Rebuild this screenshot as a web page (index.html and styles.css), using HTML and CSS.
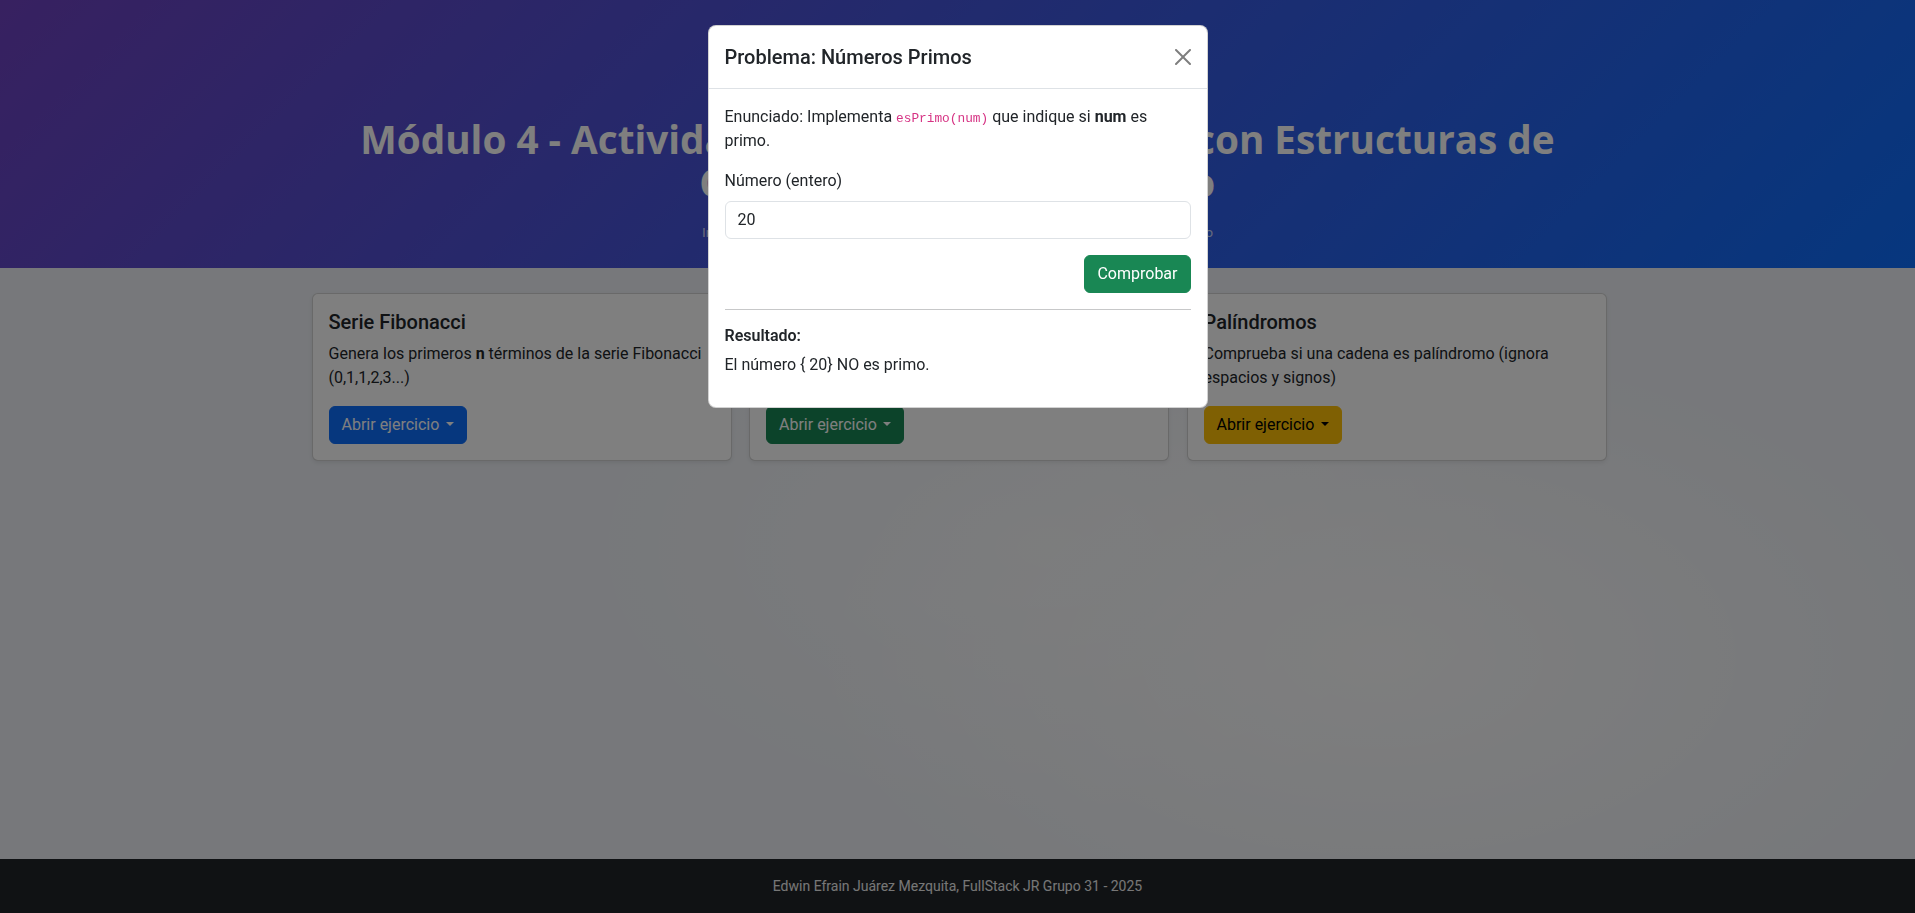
FILE: index.html
```html
<!DOCTYPE html>
<html lang="es">
<head>
<meta charset="utf-8">
<title>Módulo 4 - Actividad</title>
<link rel="stylesheet" href="styles.css">
</head>
<body>
<div class="page">
  <header class="hero">
    <h1 class="hero-title">Módulo 4 - Actividad: Solución de Ejercicios con Estructuras de<br><span class="title-line">Control en JavaScript Puro</span></h1>
    <p class="hero-sub">Interactúa con cada ejercicio: abre el modal, ingresa los datos y observa el resultado</p>
  </header>

  <main class="content">
    <div class="cards">
      <div class="card">
        <h5 class="card-title">Serie Fibonacci</h5>
        <p class="card-text">Genera los primeros <strong>n</strong> términos de la serie Fibonacci (0,1,1,2,3...)</p>
        <button class="btn btn-primary dropdown-toggle" type="button">Abrir ejercicio</button>
      </div>
      <div class="card">
        <h5 class="card-title">Números Primos</h5>
        <p class="card-text">Verifica si un número entero es primo utilizando ciclos y condicionales.</p>
        <button class="btn btn-success dropdown-toggle" type="button">Abrir ejercicio</button>
      </div>
      <div class="card">
        <h5 class="card-title">Palíndromos</h5>
        <p class="card-text">Comprueba si una cadena es palíndromo (ignora espacios y signos)</p>
        <button class="btn btn-warning dropdown-toggle" type="button">Abrir ejercicio</button>
      </div>
    </div>
  </main>

  <footer class="footer">
    <span>Edwin Efrain Juárez Mezquita, FullStack JR Grupo 31 - 2025</span>
  </footer>
</div>

<div class="backdrop"></div>

<div class="modal">
  <div class="modal-dialog">
    <div class="modal-content">
      <div class="modal-header">
        <h5 class="modal-title">Problema: Números Primos</h5>
        <button class="btn-close" type="button" aria-label="Cerrar">
          <svg viewBox="0 0 16 16" width="16" height="16"><path d="M.293.293a1 1 0 0 1 1.414 0L8 6.586 14.293.293a1 1 0 1 1 1.414 1.414L9.414 8l6.293 6.293a1 1 0 0 1-1.414 1.414L8 9.414l-6.293 6.293a1 1 0 0 1-1.414-1.414L6.586 8 .293 1.707a1 1 0 0 1 0-1.414z"/></svg>
        </button>
      </div>
      <div class="modal-body">
        <p class="statement">Enunciado: Implementa <code>esPrimo(num)</code> que indique si <strong>num</strong> es primo.</p>
        <div class="field">
          <label class="form-label" for="num">Número (entero)</label>
          <input class="form-control" id="num" type="number" value="20">
        </div>
        <div class="actions">
          <button class="btn btn-success" type="button">Comprobar</button>
        </div>
        <hr class="divider">
        <h6 class="result-title">Resultado:</h6>
        <p class="result-text">El número { 20} NO es primo.</p>
      </div>
    </div>
  </div>
</div>
</body>
</html>
```

FILE: styles.css
```css
* { box-sizing: border-box; }

html, body { height: 100%; }

body {
  margin: 0;
  font-family: Roboto, "Liberation Sans", sans-serif;
  font-size: 16px;
  line-height: 1.5;
  color: #212529;
  background-color: #eef1f6;
  background-image:
    radial-gradient(ellipse 30% 35% at 72% 72%, rgba(255,255,255,0.85), rgba(255,255,255,0) 100%),
    radial-gradient(ellipse 25% 30% at 55% 60%, rgba(255,255,255,0.5), rgba(255,255,255,0) 100%);
  overflow: hidden;
}

.page {
  min-height: 100vh;
  display: flex;
  flex-direction: column;
}

/* Header */
.hero {
  background: linear-gradient(135deg, #6f42c1 0%, #0d6efd 100%);
  color: #fff;
  text-align: center;
  padding: 118px 16px 25px;
}

.hero-title {
  margin: 0 0 18px;
  font-family: "Open Sans", Roboto, sans-serif;
  font-size: 38.7px;
  font-weight: 700;
  line-height: 43px;
}

.title-line {
  letter-spacing: 0.35px;
}

.hero-sub {
  margin: 0;
  font-size: 13.7px;
  line-height: 21px;
  color: rgba(255,255,255,0.75);
}

/* Cards */
.content {
  flex: 1;
  padding: 25px 0 0 3px;
}

.cards {
  display: grid;
  grid-template-columns: repeat(3, 420px);
  column-gap: 17.5px;
  justify-content: center;
  align-items: start;
}

.card {
  background: #fff;
  border: 1px solid rgba(0,0,0,0.175);
  border-radius: 6px;
  padding: 16px;
  box-shadow: 0 2px 4px rgba(0,0,0,0.075);
}

.card-title {
  margin: 0 0 8px;
  font-size: 20px;
  font-weight: 500;
  line-height: 1.2;
}

.card-text {
  margin: 0 0 16px;
}

/* Buttons */
.btn {
  display: inline-block;
  font-family: inherit;
  font-size: 16px;
  line-height: 1.5;
  padding: 6px 12px;
  border: 1px solid transparent;
  border-radius: 6px;
  cursor: pointer;
}

.btn-primary { background: #0d6efd; border-color: #0d6efd; color: #fff; }
.btn-success { background: #198754; border-color: #198754; color: #fff; }
.btn-warning { background: #ffc107; border-color: #ffc107; color: #000; }

.dropdown-toggle::after {
  content: "";
  display: inline-block;
  margin-left: 0.4em;
  vertical-align: 0.255em;
  border-top: 0.3em solid;
  border-right: 0.3em solid transparent;
  border-left: 0.3em solid transparent;
  border-bottom: 0;
}

/* Footer */
.footer {
  background: #212529;
  color: #eeeeee;
  text-align: center;
  font-size: 14px;
  line-height: 21px;
  padding: 17px 16px 16px;
}

/* Modal */
.backdrop {
  position: fixed;
  inset: 0;
  background: rgba(0,0,0,0.5);
}

.modal {
  position: fixed;
  inset: 0;
  overflow: hidden;
}

.modal-dialog {
  width: 500px;
  margin: 25px auto 0;
}

.modal-content {
  background: #fff;
  border: 1px solid rgba(0,0,0,0.175);
  border-radius: 8px;
}

.modal-header {
  display: flex;
  align-items: center;
  padding: 16px;
  border-bottom: 1px solid #dee2e6;
}

.modal-title {
  margin: 0;
  font-size: 20px;
  font-weight: 500;
  line-height: 1.5;
}

.btn-close {
  display: flex;
  align-items: center;
  justify-content: center;
  width: 32px;
  height: 32px;
  padding: 0;
  margin: -8px -8px -8px auto;
  border: 0;
  background: transparent;
  opacity: 0.5;
}

.btn-close svg { display: block; fill: #000; }

.modal-body {
  padding: 16px;
}

.statement { margin: 0 0 16px; }

code {
  font-family: "Liberation Mono", "DejaVu Sans Mono", monospace;
  font-size: 0.8em;
  color: #d63384;
}

.field { margin-bottom: 16px; }

.form-label {
  display: inline-block;
  margin-bottom: 8px;
}

.form-control {
  display: block;
  width: 100%;
  padding: 6px 12px;
  font-family: inherit;
  font-size: 16px;
  line-height: 1.5;
  color: #212529;
  background: #fff;
  border: 1px solid #dee2e6;
  border-radius: 6px;
  -moz-appearance: textfield;
}

.form-control::-webkit-outer-spin-button,
.form-control::-webkit-inner-spin-button { -webkit-appearance: none; margin: 0; }

.actions {
  display: flex;
  justify-content: flex-end;
}

.divider {
  margin: 16px 0;
  border: 0;
  border-top: 1px solid #212529;
  opacity: 0.25;
}

.result-title {
  margin: 0 0 8px;
  font-size: 16px;
  font-weight: 600;
  line-height: 1.2;
}

.result-text { margin: 0 0 14px; }
```
